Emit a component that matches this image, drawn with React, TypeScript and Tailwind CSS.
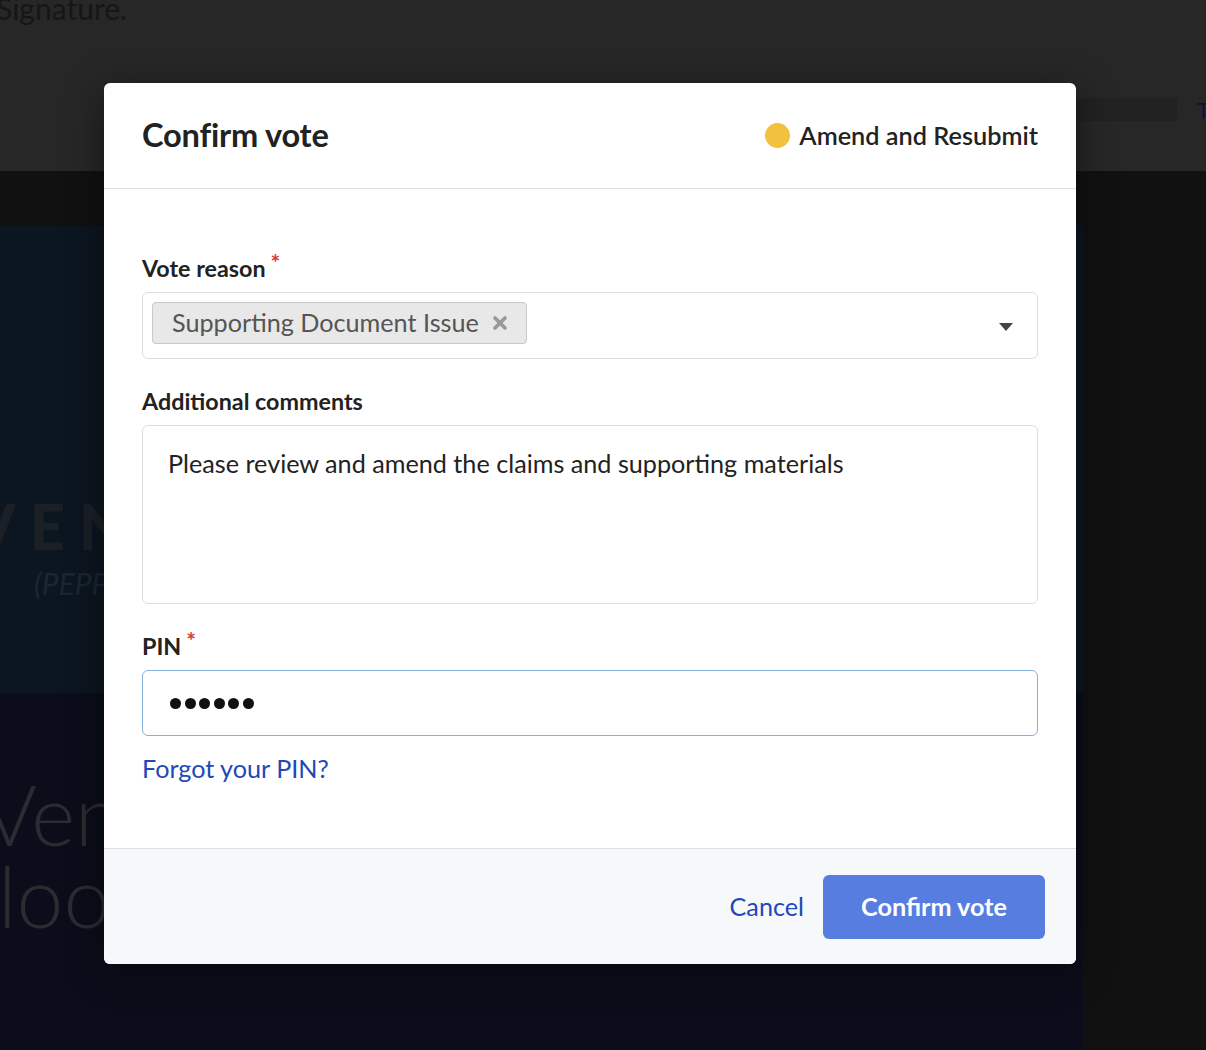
import { X } from 'lucide-react';

const font = { fontFamily: 'Lato, "Noto Sans", "Liberation Sans", sans-serif' };

function Required() {
  return <span className="ml-[5px] -mt-[3px] text-[23px] leading-none font-bold text-[#d63b34]">*</span>;
}

function FieldLabel({ children, required }: { children: React.ReactNode; required?: boolean }) {
  return (
    <div className="flex items-start h-[28px] mb-[10px] text-[23.3px] leading-[28px] font-bold text-[#222]">
      {children}
      {required && <Required />}
    </div>
  );
}

export default function App() {
  return (
    <div className="relative w-full h-[1050px] overflow-hidden bg-[#111]" style={font}>
      {/* page behind the overlay */}
      <div className="h-[171px] bg-[#272727] flex flex-col">
        <div className="-mt-[12px] -ml-[4px] text-[30px] leading-[40px] text-[#161616]">Signature.</div>
        <div className="mt-[70px] flex items-center justify-end gap-[20px]">
          <div className="w-[110px] h-[23px] rounded-[4px] bg-[#222]" />
          <div className="w-[9px] overflow-hidden text-[22px] leading-[23px] text-[#0b1432]">T</div>
        </div>
      </div>
      <div className="flex h-[879px]">
        <div className="w-[1083px] flex flex-col">
          <div className="h-[55px] bg-[#111]" />
          <div className="h-[467px] bg-[#0c1620] flex flex-col pt-[276px]">
            <div className="-ml-[28px] text-[62px] leading-[48px] font-black tracking-[14px] text-[#1b2027]">VENA</div>
            <div className="ml-[34px] mt-[18px] text-[30px] leading-[30px] italic text-[#1b2631]">(PEPPER)</div>
          </div>
          <div className="flex-1 bg-[#0b0e1a] pt-[79px]">
            <div className="-ml-[18px] text-[84px] leading-[84px] font-light text-[#2a2c31]">Vena</div>
            <div className="-ml-[2px] -mt-[2px] text-[84px] leading-[84px] font-light text-[#2a2c31]">loo</div>
          </div>
        </div>
        <div className="flex-1 bg-[#111]" />
      </div>

      {/* modal */}
      <div className="absolute left-[104px] top-[83px] w-[972px] rounded-[6px] bg-white shadow-[0_8px_40px_rgba(0,0,0,0.45)] overflow-hidden">
        <div className="h-[106px] px-[38px] flex items-center justify-between border-b border-[#dedede]">
          <h2 className="text-[32.6px] font-bold text-[#222] tracking-[-0.2px]">Confirm vote</h2>
          <div className="flex items-center gap-[9px]">
            <span className="w-[25px] h-[25px] rounded-full bg-[#f2c13d]" />
            <span className="text-[25.3px] font-semibold text-[#222]">Amend and Resubmit</span>
          </div>
        </div>

        <div className="px-[38px] pt-[65px] pb-[65px]">
          <FieldLabel required>Vote reason</FieldLabel>
          <div className="h-[67px] rounded-[6px] border border-[#dddddd] flex items-start justify-between pl-[9px] pr-[24px] pt-[9px]">
            <div className="h-[42px] flex items-center gap-[11px] pl-[19px] pr-[16px] rounded-[4px] border border-[#c8c8c8] bg-[#e8e8e8]">
              <span className="text-[25.2px] text-[#555]">Supporting Document Issue</span>
              <X className="w-[20px] h-[20px] text-[#999]" strokeWidth={4.5} />
            </div>
            <svg className="mt-[21px]" width="14" height="8" viewBox="0 0 14 8">
              <path d="M0 0 H14 L7 8 Z" fill="#444" />
            </svg>
          </div>

          <div className="mt-[28px]">
            <FieldLabel>Additional comments</FieldLabel>
            <div className="h-[179px] rounded-[6px] border border-[#dddddd] pl-[25px] pt-[22px] text-[25.2px] leading-[30px] text-[#222]">
              Please review and amend the claims and supporting materials
            </div>
          </div>

          <div className="mt-[28px]">
            <FieldLabel required>PIN</FieldLabel>
            <div className="h-[66px] rounded-[6px] border border-[#86b1dc] flex items-center pl-[27px] pt-[1px] gap-[3.6px]">
              {[0, 1, 2, 3, 4, 5].map((i) => (
                <span key={i} className="w-[11px] h-[11px] rounded-full bg-[#111]" />
              ))}
            </div>
          </div>

          <a className="block mt-[17px] text-[25.2px] leading-[30px] text-[#2148b8]" href="#">
            Forgot your PIN?
          </a>
        </div>

        <div className="h-[116px] border-t border-[#dedede] bg-[#f7f8fa] flex items-center justify-end gap-[19px] pr-[31px]">
          <button className="text-[25.2px] text-[#2148b8]">Cancel</button>
          <button className="w-[222px] h-[64px] rounded-[6px] bg-[#587de0] text-[25.2px] font-bold text-white">
            Confirm vote
          </button>
        </div>
      </div>
    </div>
  );
}
